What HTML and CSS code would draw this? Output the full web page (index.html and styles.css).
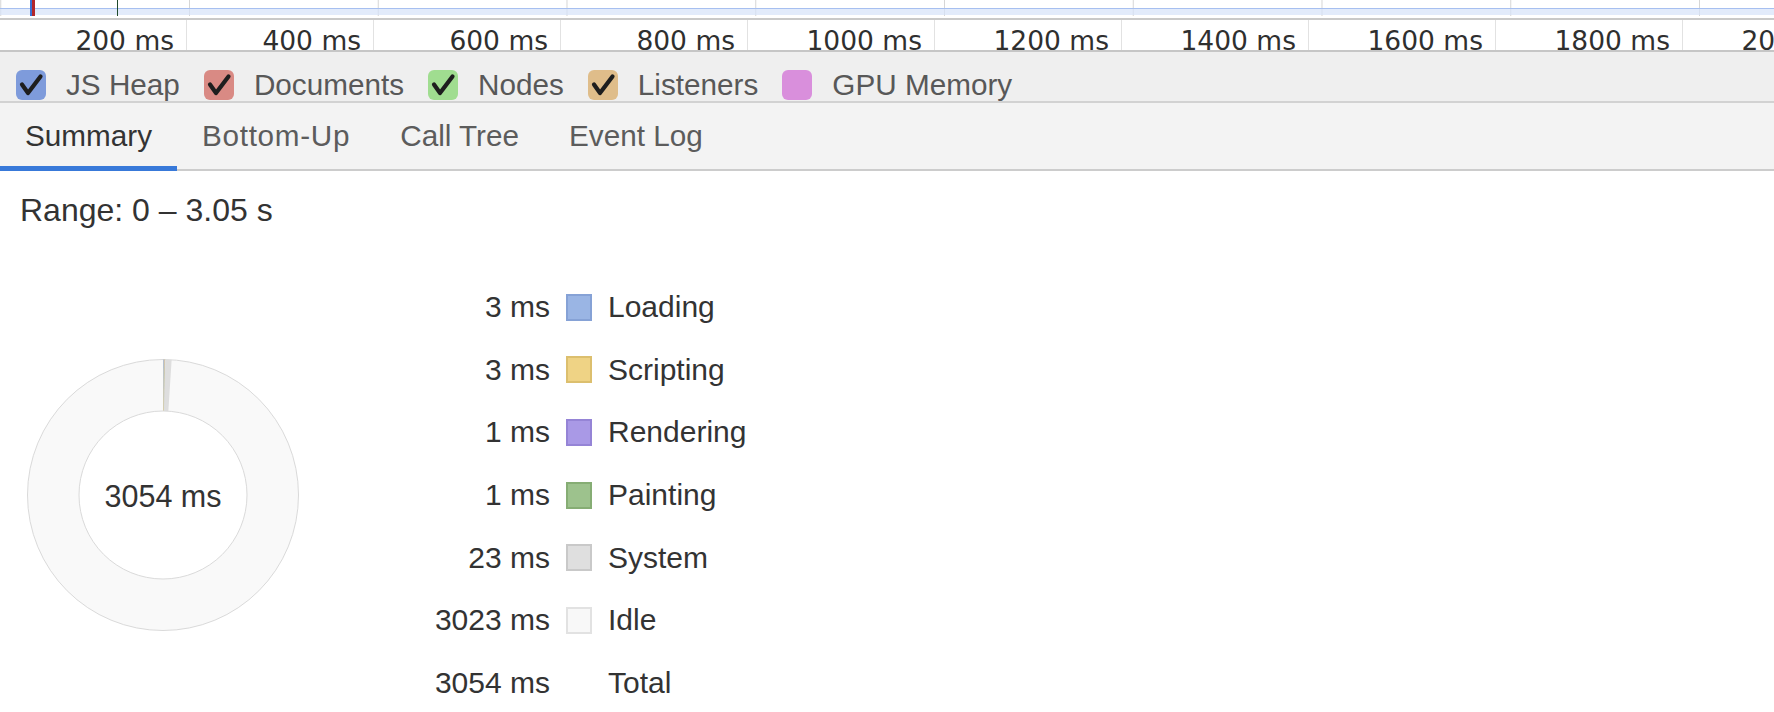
FILE: index.html
```html
<!DOCTYPE html>
<html>
<head>
<meta charset="utf-8">
<link rel="stylesheet" href="styles.css">
</head>
<body>
<div class="overview">
  <div class="ov-band"></div>
  <span class="ov-marker-blue"></span>
  <span class="ov-marker-red"></span>
  <span class="ov-marker-green"></span>
</div>
<div class="ruler">
  <div class="tick"><span>200 ms</span></div>
  <div class="tick"><span>400 ms</span></div>
  <div class="tick"><span>600 ms</span></div>
  <div class="tick"><span>800 ms</span></div>
  <div class="tick"><span>1000 ms</span></div>
  <div class="tick"><span>1200 ms</span></div>
  <div class="tick"><span>1400 ms</span></div>
  <div class="tick"><span>1600 ms</span></div>
  <div class="tick"><span>1800 ms</span></div>
  <div class="tick"><span>2000 ms</span></div>
</div>
<div class="counters">
  <label class="counter">
    <span class="cb cb-heap"><svg viewBox="0 0 30 30" class="check"><path d="M6 14.5 L12 23 L24.5 6.5"/></svg></span>
    <span class="counter-label">JS Heap</span>
  </label>
  <label class="counter">
    <span class="cb cb-docs"><svg viewBox="0 0 30 30" class="check"><path d="M6 14.5 L12 23 L24.5 6.5"/></svg></span>
    <span class="counter-label">Documents</span>
  </label>
  <label class="counter">
    <span class="cb cb-nodes"><svg viewBox="0 0 30 30" class="check"><path d="M6 14.5 L12 23 L24.5 6.5"/></svg></span>
    <span class="counter-label">Nodes</span>
  </label>
  <label class="counter">
    <span class="cb cb-listeners"><svg viewBox="0 0 30 30" class="check"><path d="M6 14.5 L12 23 L24.5 6.5"/></svg></span>
    <span class="counter-label">Listeners</span>
  </label>
  <label class="counter">
    <span class="cb cb-gpu"></span>
    <span class="counter-label">GPU Memory</span>
  </label>
</div>
<div class="tabbar">
  <div class="tab active">Summary</div>
  <div class="tab tab-wide">Bottom-Up</div>
  <div class="tab">Call Tree</div>
  <div class="tab">Event Log</div>
</div>
<div class="range">Range: 0 – 3.05 s</div>
<div class="summary">
  <div class="donut">
    <svg class="donut-svg" width="272" height="272" viewBox="0 0 272 272">
      <circle cx="136" cy="136" r="135.5" fill="#f9f9f9" stroke="#dadada" stroke-width="1"/>
      <path d="M136 0.5 L136.84 0.5 L136.52 52 L136 52 Z" fill="#9ab5e4"/>
      <path d="M136.84 0.5 L137.67 0.51 L137.04 52.01 L136.52 52 Z" fill="#e5c66a"/>
      <path d="M137.67 0.51 L137.95 0.51 L137.21 52.01 L137.04 52.01 Z" fill="#a998e6"/>
      <path d="M137.95 0.51 L138.23 0.52 L137.38 52.01 L137.21 52.01 Z" fill="#9bc18b"/>
      <path d="M138.23 0.52 A135.5 135.5 0 0 1 144.64 0.78 L141.35 52.17 A84 84 0 0 0 137.38 52.01 Z" fill="#dedede"/>
      <circle cx="136" cy="136" r="84" fill="#ffffff" stroke="#dadada" stroke-width="1"/>
    </svg>
    <div class="donut-total">3054 ms</div>
  </div>
  <div class="legend">
    <div class="val">3 ms</div><div class="sw sw-loading"></div><div class="name">Loading</div>
    <div class="val">3 ms</div><div class="sw sw-scripting"></div><div class="name">Scripting</div>
    <div class="val">1 ms</div><div class="sw sw-rendering"></div><div class="name">Rendering</div>
    <div class="val">1 ms</div><div class="sw sw-painting"></div><div class="name">Painting</div>
    <div class="val">23 ms</div><div class="sw sw-system"></div><div class="name">System</div>
    <div class="val">3023 ms</div><div class="sw sw-idle"></div><div class="name">Idle</div>
    <div class="val">3054 ms</div><div class="sw-none"></div><div class="name">Total</div>
  </div>
</div>
</body>
</html>
```
FILE: styles.css
```css
html, body {
  margin: 0;
  padding: 0;
  background: #ffffff;
  overflow: hidden;
}
body {
  width: 1774px;
  height: 712px;
  font-family: "Liberation Sans", Arial, sans-serif;
  color: #333333;
}

/* overview strip */
.overview {
  position: relative;
  box-sizing: border-box;
  height: 20px;
  padding-top: 8px;
  background-color: #ffffff;
  background-image: linear-gradient(to right, #d6d6d6 1px, transparent 1px);
  background-size: 188.75px 16px;
  background-repeat: repeat-x;
  background-position: 189px 0;
  border-bottom: 2px solid #c9c9c9;
}
.ov-band {
  height: 6px;
  border-top: 1px solid #a6bff0;
  background: rgba(214, 226, 250, 0.7);
}
.ov-marker-blue {
  position: absolute;
  left: 30px;
  top: 0;
  width: 2px;
  height: 16px;
  background: #3a6fd0;
}
.ov-marker-red {
  position: absolute;
  left: 32px;
  top: 0;
  width: 3px;
  height: 16px;
  background: #b3262a;
}
.ov-marker-green {
  position: absolute;
  left: 117px;
  top: 0;
  width: 1px;
  height: 16px;
  background: #1f4a2c;
}

/* ruler */
.ruler {
  display: flex;
  height: 30px;
  overflow: hidden;
  border-bottom: 2px solid #c6c6c6;
  background: #ffffff;
}
.tick {
  flex: 0 0 187px;
  box-sizing: border-box;
  border-right: 1px solid #e2e2e2;
  text-align: right;
  padding-right: 12px;
  padding-top: 6px;
  font-family: "DejaVu Sans", Verdana, sans-serif;
  font-size: 26.5px;
  line-height: 30px;
  color: #2f2f2f;
  white-space: nowrap;
}

/* counters */
.counters {
  display: flex;
  align-items: center;
  gap: 24px;
  height: 51px;
  box-sizing: border-box;
  padding: 16px 0 0 16px;
  background: #efefef;
  border-bottom: 2px solid #d2d2d2;
}
.counter {
  display: flex;
  align-items: center;
  gap: 20px;
}
.cb {
  width: 30px;
  height: 30px;
  border-radius: 6px;
  display: flex;
  align-items: center;
  justify-content: center;
  box-sizing: border-box;
}
.cb-heap { background: #7e9bdb; }
.cb-docs { background: #d98a84; }
.cb-nodes { background: #a0dd90; }
.cb-listeners { background: #dfbd8a; }
.cb-gpu { background: #d98fdc; }
.check {
  width: 30px;
  height: 30px;
}
.check path {
  fill: none;
  stroke: #1e1e1e;
  stroke-width: 4.2;
  stroke-linecap: round;
  stroke-linejoin: round;
}
.counter-label {
  font-size: 29.7px;
  line-height: 32px;
  color: #585858;
}

/* tabs */
.tabbar {
  display: flex;
  height: 66px;
  background: #f3f3f3;
  border-bottom: 2px solid #cccccc;
}
.tab {
  position: relative;
  display: flex;
  align-items: center;
  padding: 0 25px;
  font-size: 29.7px;
  color: #5c5c5c;
}
.tab-wide {
  letter-spacing: 0.7px;
}
.tab.active {
  color: #333333;
}
.tab.active::after {
  content: "";
  position: absolute;
  left: 0;
  right: 0;
  bottom: -2px;
  height: 5px;
  background: #3879d9;
}

/* range */
.range {
  margin: 23px 0 0 20px;
  font-size: 32px;
  line-height: 32px;
  color: #333333;
}

/* summary */
.summary {
  display: flex;
  align-items: center;
  margin-top: 50px;
  padding-left: 27px;
}
.donut {
  display: grid;
  place-items: center;
  width: 272px;
  height: 272px;
}
.donut-svg, .donut-total {
  grid-area: 1 / 1;
}
.donut-total {
  font-size: 30.5px;
  color: #333333;
  padding-top: 2px;
}
.legend {
  display: grid;
  grid-template-columns: 120px 26px auto;
  grid-auto-rows: 62.6px;
  column-gap: 16px;
  align-items: center;
  margin-left: 131px;
}
.val {
  text-align: right;
  font-size: 30px;
  color: #333333;
  white-space: nowrap;
}
.name {
  font-size: 30px;
  color: #333333;
  white-space: nowrap;
}
.sw {
  width: 26px;
  height: 27px;
  box-sizing: border-box;
  border: 2px solid;
}
.sw-loading { background: #9ab5e4; border-color: #86a2d6; }
.sw-scripting { background: #efd385; border-color: #dcbf6e; }
.sw-rendering { background: #a999e6; border-color: #9584d6; }
.sw-painting { background: #9dc28d; border-color: #86ad74; }
.sw-system { background: #dfdfdf; border-color: #c9c9c9; }
.sw-idle { background: #f8f8f8; border-color: #e2e2e2; }
.sw-none { width: 26px; }
```
